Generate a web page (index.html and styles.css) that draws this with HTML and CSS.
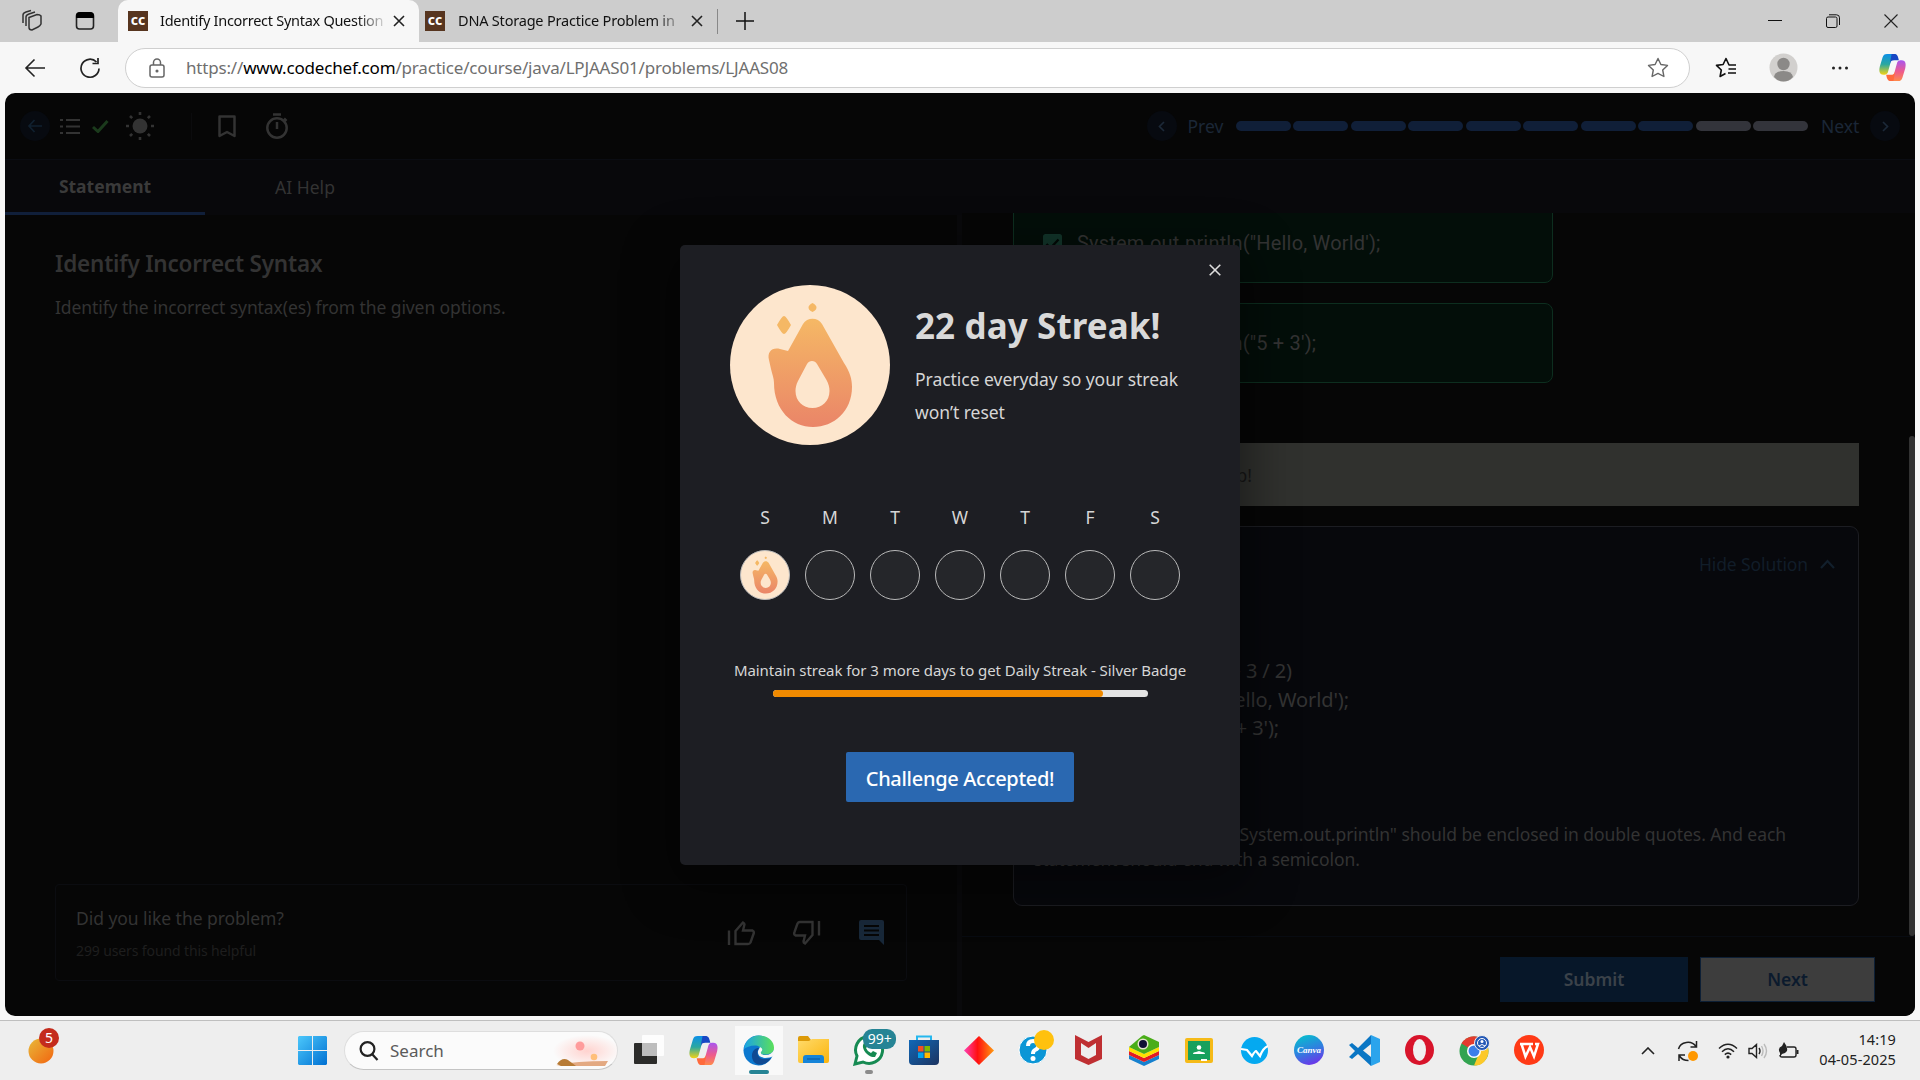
FILE: index.html
```html
<!DOCTYPE html>
<html lang="en">
<head>
<meta charset="utf-8">
<title>Identify Incorrect Syntax</title>
<link rel="stylesheet" href="styles.css">
</head>
<body>
<svg class="defs" width="0" height="0">
  <defs>
    <linearGradient id="fire" x1="0" y1="0" x2="0" y2="1"><stop offset="0" stop-color="#f5b865"/><stop offset="1" stop-color="#ea8568"/></linearGradient>
    <linearGradient id="cpA" x1="0" y1="0" x2="0" y2="1"><stop offset="0" stop-color="#0c8fe8"/><stop offset=".5" stop-color="#2ba8a0"/><stop offset="1" stop-color="#f4d314"/></linearGradient>
    <linearGradient id="cpB" x1="0" y1="0" x2="0" y2="1"><stop offset="0" stop-color="#a855f0"/><stop offset=".55" stop-color="#ee5b8c"/><stop offset="1" stop-color="#ff8a4a"/></linearGradient>
    <linearGradient id="win" x1="0" y1="0" x2="1" y2="1"><stop offset="0" stop-color="#4cc8fb"/><stop offset="1" stop-color="#0070d2"/></linearGradient>
    <linearGradient id="edgeG" x1="0" y1="0" x2="1" y2="0"><stop offset="0" stop-color="#1aa3e6"/><stop offset="1" stop-color="#5be05a"/></linearGradient>
    <linearGradient id="dia" x1="0" y1="0" x2="1" y2="0"><stop offset="0" stop-color="#ff3fb4"/><stop offset=".45" stop-color="#ff1010"/><stop offset="1" stop-color="#ff9a10"/></linearGradient>
    <linearGradient id="store" x1="0" y1="0" x2="1" y2="1"><stop offset="0" stop-color="#1068b8"/><stop offset="1" stop-color="#1c3360"/></linearGradient>
    <linearGradient id="moon" x1="0" y1="0" x2="1" y2="1"><stop offset="0" stop-color="#e8b93a"/><stop offset="1" stop-color="#f2640f"/></linearGradient>
    <linearGradient id="fold" x1="0" y1="0" x2="1" y2="1"><stop offset="0" stop-color="#ffdb6b"/><stop offset="1" stop-color="#fbb40c"/></linearGradient>
    <radialGradient id="sky"><stop offset="0" stop-color="#ffd3cf"/><stop offset="1" stop-color="#ffd3cf" stop-opacity="0"/></radialGradient>
    <symbol id="flame" viewBox="0 0 160 160">
      <path fill="url(#fire)" fill-rule="evenodd" d="M58 66 73 39c4-7 15-7 19 0l22 39c6 9 8 16 8 24 0 24-18 40-39 40S44 125 44 98c0-5-2-9-3-14l-2-9c-2-8 3-13 11-11zM77 79 68 96c-2 4-2.500 7-2.500 10 0 10 7.500 17 17 17s17-7 17-17c0-4-1-7-3-11L87 79c-2-4-8-4-10 0z"/>
      <path fill="#f5b865" d="M54 31q2 0 7 9-5 9-7 9t-7-9q5-9 7-9zM82.500 18q4 2 4 4.500t-4 4.500q-4-2-4-4.500t4-4.500z"/>
    </symbol>
    <symbol id="copilot" viewBox="0 0 30 32">
      <path fill="url(#cpA)" d="M9 1h9c-3 1-4 5-5 9l-3 11c-1 3-3 3-5 3-5 0-5-5-4-9l3-10c1-3 2-4 5-4z"/>
      <path fill="#1747c4" d="M14 1h3c3 0 4 2 5 7h-5c-3 0-4 1-5 4z"/>
      <path fill="url(#cpB)" d="M21 31h-9c3-1 4-5 5-9l3-11c1-3 3-3 5-3 5 0 5 5 4 9l-3 10c-1 3-2 4-5 4z"/>
      <path fill="#ff6a3c" d="M16 31h-3c-3 0-4-2-5-7h5c3 0 4-1 5-4z"/>
    </symbol>
  </defs>
</svg>

<header class="tabstrip">
  <div class="strip-tools">
    <svg width="24" height="24" viewBox="0 0 24 24" fill="none" stroke="#333" stroke-width="1.500"><path d="M9 8.500 17 5.500q3 0 4 1.500v8q-1 2-3 3l-6 3q-3 0-3-2.500zM6 17V8q0-2 3-3l6-2M3 14V6q0-2 3-3l5-1.500"/></svg>
    <svg width="22" height="22" viewBox="0 0 22 22"><rect x="2.500" y="3" width="17" height="16" rx="3" fill="none" stroke="#222" stroke-width="1.600"/><path d="M2 8V6q0-4 4-4h10q4 0 4 4v2z" fill="#000"/></svg>
  </div>
  <div class="tab active"><span class="fav">cc</span><span class="tab-title t1">Identify Incorrect Syntax Question</span><svg class="tx" width="12" height="12" viewBox="0 0 12 12"><path d="m1 1 10 10M11 1 1 11" stroke="#222" stroke-width="1.600"/></svg></div>
  <div class="tab"><span class="fav">cc</span><span class="tab-title t2">DNA Storage Practice Problem in</span><svg class="tx" width="12" height="12" viewBox="0 0 12 12"><path d="m1 1 10 10M11 1 1 11" stroke="#222" stroke-width="1.600"/></svg></div>
  <i class="tab-sep"></i>
  <svg class="plus" width="18" height="18" viewBox="0 0 18 18"><path d="M9 0v18M0 9h18" stroke="#111" stroke-width="1.500"/></svg>
  <div class="win-ctl">
    <svg width="14" height="14" viewBox="0 0 14 14"><path d="M0 6.500h14" stroke="#111"/></svg>
    <svg width="14" height="14" viewBox="0 0 14 14" fill="none" stroke="#111"><rect x=".5" y="3" width="10.500" height="10.500" rx="1.500"/><path d="M3 .8h7.500q3 0 3 3V11"/></svg>
    <svg width="14" height="14" viewBox="0 0 14 14"><path d="m.5.500 13 13M13.500.500l-13 13" stroke="#222" stroke-width="1.100"/></svg>
  </div>
</header>

<div class="toolbar">
  <svg class="nav-back" width="22" height="20" viewBox="0 0 22 20" fill="none" stroke="#222" stroke-width="1.600"><path d="M21 10H2M10.500 1.500 2 10l8.500 8.500"/></svg>
  <svg class="nav-reload" width="22" height="22" viewBox="0 0 22 22" fill="none" stroke="#222" stroke-width="1.700"><path d="M20 11.500A9 9 0 1 1 17.500 5M19 1v5.500h-5.500"/></svg>
  <div class="omnibox">
    <svg width="16" height="20" viewBox="0 0 16 20" fill="none" stroke="#666" stroke-width="1.500"><rect x="1" y="7" width="14" height="12" rx="2"/><path d="M4.500 7V4.500a3.500 3.500 0 0 1 7 0V7"/><circle cx="8" cy="13" r=".8" fill="#666"/></svg>
    <span class="url">https://<b>www.codechef.com</b>/practice/course/java/LPJAAS01/problems/LJAAS08</span>
    <svg class="star" width="22" height="21" viewBox="0 0 22 21" fill="none" stroke="#666" stroke-width="1.400"><path stroke-linejoin="round" d="m11 1.500 2.900 6 6.600.9-4.800 4.600 1.200 6.500L11 16.400l-5.900 3.100L6.300 13 1.500 8.400l6.600-.9z"/></svg>
  </div>
  <div class="tool-right">
    <svg width="22" height="21" viewBox="0 0 22 21" fill="none" stroke="#111" stroke-width="1.600"><path stroke-linejoin="round" d="M20 8h-6L11 1.500l-2.900 6-6.600.9L6.300 13l-1.200 6.500L10.500 16.500M13.500 12H21M13 16h8M15 8h6"/></svg>
    <svg width="29" height="29" viewBox="0 0 29 29"><circle cx="14.500" cy="14.500" r="14" fill="#d2d0ce"/><circle cx="14.500" cy="11" r="6.200" fill="#8b8987"/><path d="M5 24q1-6 9.500-6T24 24q-4 4.500-9.500 4.500T5 24z" fill="#8b8987"/></svg>
    <svg width="18" height="6" viewBox="0 0 18 6" fill="#222"><circle cx="2.500" cy="3" r="1.500"/><circle cx="9" cy="3" r="1.500"/><circle cx="15.500" cy="3" r="1.500"/></svg>
    <svg width="29" height="29"><use href="#copilot"/></svg>
  </div>
</div>

<main class="app">
  <div class="appbar">
    <span class="round"><svg width="16" height="14" viewBox="0 0 16 14" fill="none" stroke="#10202f" stroke-width="1.700"><path d="M15 7H2M7.500 1 2 7l5.500 6"/></svg></span>
    <svg class="i-list" width="20" height="17" viewBox="0 0 20 17" fill="none" stroke="#333" stroke-width="2"><path d="M0 2h3M6 2h14M0 8.500h3M6 8.500h14M0 15h3M6 15h14"/></svg>
    <svg class="i-check" width="17" height="13" viewBox="0 0 17 13"><path d="m1 7 5 4.500L15.500 1" fill="none" stroke="#1b3a1c" stroke-width="3"/></svg>
    <svg class="i-sun" width="28" height="28" viewBox="0 0 28 28"><circle cx="14" cy="14" r="7.500" fill="#333"/><g stroke="#333" stroke-width="2.600"><path d="M14 0v3M14 25v3M0 14h3M25 14h3M4 4l2.200 2.200M21.800 21.800 24 24M24 4l-2.200 2.200M6.200 21.800 4 24"/></g></svg>
    <i class="bar-sep"></i>
    <svg class="i-mark" width="18" height="23" viewBox="0 0 18 23"><path d="M1.500 1.500h15v19.500L9 17l-7.500 4z" fill="none" stroke="#333" stroke-width="2.500" stroke-linejoin="round"/></svg>
    <svg class="i-timer" width="24" height="26" viewBox="0 0 24 26" fill="none" stroke="#333" stroke-width="2.500"><circle cx="12" cy="15" r="9.700"/><path d="M8 1.500h8M12 9v7M19 5.500l2.500 2.500"/></svg>
    <div class="progress-nav">
      <span class="round r2"><svg width="7" height="11" viewBox="0 0 7 11" fill="none" stroke="#1c2938" stroke-width="1.700"><path d="M6 1 1.500 5.500 6 10"/></svg></span>
      <span class="pn prev">Prev</span>
      <div class="segs"><i></i><i></i><i></i><i></i><i></i><i></i><i></i><i></i><i class="g"></i><i class="g"></i></div>
      <span class="pn next">Next</span>
      <span class="round r2"><svg width="7" height="11" viewBox="0 0 7 11" fill="none" stroke="#1c2938" stroke-width="1.700"><path d="M1 1 5.500 5.500 1 10"/></svg></span>
    </div>
  </div>
  <div class="subtabs"><span class="st on">Statement</span><span class="st">AI Help</span></div>
  <div class="panes">
    <section class="left">
      <h1>Identify Incorrect Syntax</h1>
      <p class="desc">Identify the incorrect syntax(es) from the given options.</p>
      <div class="feedback">
        <div class="fb-text"><span class="q">Did you like the problem?</span><span class="cnt">299 users found this helpful</span></div>
        <div class="fb-icons">
          <svg width="28" height="26" viewBox="0 0 28 26" fill="none" stroke="#333" stroke-width="2.400"><path d="M2 10.500V25M8.500 11 16 2.500q2 1 1.200 3L16 10.500h9.500q2 1 1 3.500l-3 8.500q-.8 1.500-2.500 1.500H8.500z"/></svg>
          <svg width="28" height="26" viewBox="0 0 28 26" fill="none" stroke="#333" stroke-width="2.400"><path d="M26 15.500V1M19.500 15 12 23.500q-2-1-1.200-3l1.200-5H2.500q-2-1-1-3.500l3-8.500Q5.300 2 7 2h12.500z"/></svg>
          <svg width="25" height="25" viewBox="0 0 25 25"><path fill="#182839" fill-rule="evenodd" d="M2 0h21q2 0 2 2v23l-5-5H2q-2 0-2-2V2q0-2 2-2zm3 5v2h15V5zm0 4.500v2h15v-2zM5 14v2h15v-2z"/></svg>
        </div>
      </div>
    </section>
    <section class="right">
      <div class="scroll">
        <div class="opt o1"><svg width="19" height="19" viewBox="0 0 19 19"><rect width="19" height="19" rx="2.500" fill="#12352a"/><path d="m3.500 10 4 4 8-8.500" fill="none" stroke="#030a07" stroke-width="2.300"/></svg><span>System.out.println("Hello, World');</span></div>
        <div class="opt o2"><svg width="19" height="19" viewBox="0 0 19 19"><rect width="19" height="19" rx="2.500" fill="#12352a"/><path d="m3.500 10 4 4 8-8.500" fill="none" stroke="#030a07" stroke-width="2.300"/></svg><span>System.out.println("5 + 3');</span></div>
        <div class="notice"><span>Great job!</span></div>
        <div class="solution">
          <div class="hide"><span>Hide Solution</span><svg width="15" height="10" viewBox="0 0 15 10"><path d="m1 9 6.500-7L14 9" fill="none" stroke="#121f2c" stroke-width="2.200"/></svg></div>
          <ol class="code"><li class="c1">System.out.println(5 + 3 / 2)</li><li class="c2">System.out.println("Hello, World');</li><li class="c3">System.out.println("5 + 3');</li></ol>
          <p class="expl"><span class="e1">"System.out.println" should be enclosed in double quotes. And each</span><span class="e2">statement should end with a semicolon.</span></p>
        </div>
      </div>
      <div class="actions"><span class="btn submit">Submit</span><span class="btn nxt">Next</span></div>
      <i class="thumb"></i>
    </section>
  </div>

  <div class="modal">
    <svg class="close" width="12" height="12" viewBox="0 0 12 12"><path d="m.7.700 10.600 10.600M11.300.700.7 11.300" stroke="#ddd" stroke-width="1.600"/></svg>
    <div class="hero">
      <span class="flame-lg"><svg width="160" height="160"><use href="#flame"/></svg></span>
      <div class="hero-text"><h2>22 day Streak!</h2><p>Practice everyday so your streak<br>won’t reset</p></div>
    </div>
    <div class="week">
      <div class="day"><span>S</span><i class="done"><svg width="48" height="48"><use href="#flame"/></svg></i></div>
      <div class="day"><span>M</span><i></i></div>
      <div class="day"><span>T</span><i></i></div>
      <div class="day"><span>W</span><i></i></div>
      <div class="day"><span>T</span><i></i></div>
      <div class="day"><span>F</span><i></i></div>
      <div class="day"><span>S</span><i></i></div>
    </div>
    <p class="goal">Maintain streak for 3 more days to get Daily Streak - Silver Badge</p>
    <div class="meter"><i style="width:88%"></i></div>
    <button class="accept">Challenge Accepted!</button>
  </div>
</main>

<footer class="taskbar">
  <div class="widget"><svg width="26" height="26" viewBox="0 0 26 26"><circle cx="13" cy="13" r="12.500" fill="url(#moon)"/></svg><span class="badge red">5</span></div>
  <svg class="start" width="29" height="29" viewBox="0 0 29 29" fill="url(#win)"><path d="M1 0h13v14H0V1zM15 0h13l1 1v13H15zM0 15h14v14H1l-1-1zM15 15h14v13l-1 1H15z"/></svg>
  <div class="search">
    <svg width="20" height="20" viewBox="0 0 20 20" fill="none" stroke="#222" stroke-width="2.200"><circle cx="8.500" cy="8" r="6.900"/><path d="m13 13 5.500 6"/></svg>
    <span>Search</span>
    <svg class="scene" width="64" height="34" viewBox="0 0 64 34"><ellipse cx="34" cy="17" rx="34" ry="16" fill="url(#sky)"/><circle cx="27" cy="12" r="4.500" fill="#ff9c9c"/><circle cx="41" cy="23" r="3.300" fill="#ffbf7a"/><path d="M3 31q20-4 52-4l-3 5H10z" fill="#e3a982"/><path d="M4 30q5-7 11-4l8 6H8z" fill="#b77b35"/></svg>
  </div>
  <div class="pins">
    <span class="pin"><svg width="30" height="30" viewBox="0 0 30 30"><rect x="0" y="8" width="23" height="21" rx="1" fill="#2c2c2a"/><rect x="8" y="0" width="22" height="21" rx="1" fill="#fff" fill-opacity=".85"/><path d="M8 8h15v13H8z" fill="#bdbdbd"/></svg></span>
    <span class="pin"><svg width="31" height="31"><use href="#copilot"/></svg></span>
    <span class="pin cur"><svg width="31" height="31" viewBox="0 0 31 31"><circle cx="15.500" cy="15.500" r="15" fill="#0c78cf"/><path d="M1 14C2 6 8 .5 16 .5c9 0 15 6 15 12 0 5-4 7-9 7-4 0-5-1-4-3 1-4-2-6-6-6-5 0-9 2-11 3.500z" fill="url(#edgeG)"/><path d="M28 23c-5 9-18 9-19-1-.5-6 3-9 7-9-4 6 0 14 12 10z" fill="#104a93"/><path d="M17 12q4 2 1 5-1 3 5 3 5 0 8-5v6q-4 2-9 2-8-1-7-7z" fill="#f7f7f7"/></svg></span>
    <span class="pin"><svg width="31" height="28" viewBox="0 0 31 28"><path d="M0 2q0-2 2-2h8l3 4v5H0z" fill="#dc9a08"/><path d="M0 5h11l3-2h17v22q0 2-2 2H2q-2 0-2-2z" fill="url(#fold)"/><path d="M5 27v-5q0-3 3-3h15q3 0 3 3v5z" fill="#1684d8"/><path d="M9 23h13" stroke="#08549c"/></svg></span>
    <span class="pin wa"><svg width="32" height="32" viewBox="0 0 32 32"><path d="M2 30l2-8A13.500 13.500 0 1 1 10 28z" fill="#fff" stroke="#168a52" stroke-width="3"/><path d="M11 9c-4 5 4 15 11 14l2-4-4-2-2 2q-4-2-5-5l2-2-2-4z" fill="#168a52"/></svg><b class="badge teal">99+</b></span>
    <span class="pin"><svg width="30" height="30" viewBox="0 0 30 30"><path d="M8 6V1.500h14V6" fill="none" stroke="#25b7ee" stroke-width="2"/><path d="M0 5h30v21q0 4-4 4H4q-4 0-4-4z" fill="url(#store)"/><path fill="#f25022" d="M9 11h5.500v5.500H9z"/><path fill="#7fba00" d="M15.500 11H21v5.500h-5.500z"/><path fill="#00a4ef" d="M9 17.500h5.500V23H9z"/><path fill="#ffb900" d="M15.500 17.500H21V23h-5.500z"/></svg></span>
    <span class="pin"><svg width="30" height="29" viewBox="0 0 30 29"><path d="m15 0 15 14.500L15 29 0 14.500z" fill="url(#dia)"/></svg></span>
    <span class="pin help"><svg width="38" height="36" viewBox="0 0 38 36"><circle cx="16" cy="20" r="14" fill="#0b96d6" stroke="#fff"/><path d="M11 16q0-5 5-5t5.500 4.500q0 3-3.500 4.500-2 1-2 4" fill="none" stroke="#fff" stroke-width="4"/><circle cx="16" cy="28.500" r="2.500" fill="#fff"/><circle cx="27" cy="10" r="10" fill="#ffc10e"/></svg></span>
    <span class="pin"><svg width="27" height="30" viewBox="0 0 27 30"><path d="M0 0 13.500 7 27 0v24l-13.500 6L0 24zM6 8v12l7.500 4 7.500-4V8l-7.500 5z" fill="#bf2f32" fill-rule="evenodd"/></svg></span>
    <span class="pin"><svg width="30" height="31" viewBox="0 0 30 31"><path d="m0 20 15 7 15-7v4l-15 7-15-7z" fill="#1681cf"/><path d="m0 16 15 7 15-7v4l-15 7-15-7z" fill="#e31b22"/><path d="m0 12 15 7 15-7v4l-15 7-15-7z" fill="#ffe000"/><path d="M15 0 30 7v5l-15 7-15-7L13 1z" fill="#49ad18"/><circle cx="14" cy="9" r="5.500" fill="#e5e3ce"/><circle cx="14" cy="9" r="4" fill="#111035"/></svg></span>
    <span class="pin"><svg width="28" height="25" viewBox="0 0 28 25"><rect width="28" height="25" rx="2" fill="#f5ba18"/><path d="M3 3h22v19H3z" fill="#17a05d"/><circle cx="14" cy="9.500" r="2.300" fill="#fff"/><path d="M8 16q0-2 3-2l3-1 3 1q3 0 3 2z" fill="#fff"/><path d="M16 21h6v2h-6z" fill="#fff"/></svg></span>
    <span class="pin"><svg width="27" height="27" viewBox="0 0 27 27"><circle cx="13.500" cy="13.500" r="13.500" fill="#05a9f0"/><path d="m0 12 6 1 5 6q3-5 4-5l4 5q3-8 8-10" fill="none" stroke="#fff" stroke-width="2.200"/></svg></span>
    <span class="pin"><span class="canva">Canva</span></span>
    <span class="pin"><svg width="31" height="31" viewBox="0 0 31 31"><path d="M22 0 9 13l-6-5-3 2 6 6-6 6 3 2 6-5 13 12zM22 9v13l-8-6.500z" fill="#0a76c4" fill-rule="evenodd"/><path d="m22 0 9 4v23l-9 4z" fill="#2ba4ec"/></svg></span>
    <span class="pin"><svg width="29" height="30" viewBox="0 0 29 30"><ellipse cx="14.500" cy="15" rx="14.500" ry="15" fill="#d8142b"/><ellipse cx="14.500" cy="15" rx="6.500" ry="11" fill="#f0f0f0"/></svg></span>
    <span class="pin"><svg width="31" height="31" viewBox="0 0 31 31"><circle cx="15" cy="16" r="14.500" fill="#32a350"/><path d="M2.500 8.500A14.500 14.500 0 0 1 27.500 8.500L15 16z" fill="#e33b2e"/><path d="M27.500 8.500q5 10-2.500 18.500-4 4-10 3.500L21 16l-2-7z" fill="#fcc929"/><circle cx="15" cy="16" r="7" fill="#fff"/><circle cx="15" cy="16" r="5.500" fill="#3b7de9"/><circle cx="23" cy="8" r="7.500" fill="#2459b5" stroke="#eee"/><circle cx="23" cy="8" r="4.500" fill="none" stroke="#fff"/><circle cx="23" cy="6.500" r="1.500" fill="#fff"/><path d="M20 11q3-3 6 0" stroke="#fff" fill="none"/></svg></span>
    <span class="pin"><svg width="30" height="30" viewBox="0 0 30 30"><circle cx="15" cy="15" r="15" fill="#ff3a16"/><path d="M6 9h13M7.500 9l4 12.500L16 12l4 9.500L24 9h-3" fill="none" stroke="#fff" stroke-width="2.500"/></svg></span>
  </div>
  <div class="tray">
    <svg class="chev" width="14" height="8" viewBox="0 0 14 8"><path d="m1 7 6-6 6 6" fill="none" stroke="#222" stroke-width="1.600"/></svg>
    <svg class="sync" width="22" height="22" viewBox="0 0 22 22" fill="none" stroke="#222" stroke-width="1.500"><path d="M1.500 9A9.500 8.500 0 0 1 19 6.500M19.500 1v6h-6M2 21v-6h6M2.500 16q3 4.500 9 4.500"/><circle cx="16" cy="16" r="5" fill="#ff9800" stroke="none"/></svg>
    <svg class="wifi" width="20" height="16" viewBox="0 0 20 16" fill="none" stroke="#222" stroke-width="1.500"><path d="M1 5.500q9-8.500 18 0M4 8.800q6-6 12 0M6.800 11.600q3.200-3 6.400 0"/><circle cx="10" cy="14" r="1.600" fill="#222" stroke="none"/></svg>
    <svg class="spk" width="20" height="16" viewBox="0 0 20 16" fill="none" stroke="#222" stroke-width="1.400"><path d="M1 5.500h3L8.500 1.500v13L4 10.500H1zM11 5q2 3 0 6"/><path d="M13.500 3q3 5 0 10M16 1q5 7 0 14" stroke="#bbb"/></svg>
    <svg class="bat" width="21" height="17" viewBox="0 0 21 17"><path d="M9 5h7q2 0 2 2v6q0 2-2 2H4q-2 0-2-2" fill="none" stroke="#222" stroke-width="1.400"/><path d="M18.500 8h2v4h-2zM6 0q4 5 3 9-2 3-5 3l-2 3v-4Q-1 6 4 4z" fill="#222"/></svg>
    <div class="clock"><span>14:19</span><span>04-05-2025</span></div>
  </div>
</footer>
</body>
</html>
```
FILE: styles.css
```css
* { box-sizing: border-box; }
body { margin: 0; width: 1920px; height: 1080px; overflow: hidden; background: #f7f7f7; font-family: "Noto Sans", "Open Sans", sans-serif; display: flex; flex-direction: column; }
svg { flex: none; display: block; }
h1, h2, p, ol { margin: 0; padding: 0; font-weight: 400; }
.defs { position: absolute; }
span { white-space: nowrap; }

/* Browser window */
.tabstrip { height: 42px; flex: none; background: #cdcdcd; display: flex; align-items: center; }
.strip-tools { width: 118px; height: 42px; padding-left: 20px; display: flex; align-items: center; gap: 30px; }
.tab { height: 42px; width: 298px; padding: 0 0 0 6px; display: flex; align-items: center; }
.tab.active { width: 301px; padding-left: 10px; background: #f7f7f7; border-radius: 10px 10px 0 0; }
.fav { width: 20px; height: 20px; background: #57351f; color: #fff; font: 700 14px/17px "Noto Sans", sans-serif; text-align: center; flex: none; }
.tab-title { margin-left: 12px; font-size: 14.5px; line-height: 20px; margin-top: -2px; color: #111; overflow: hidden; width: 224px; letter-spacing: -.28px; }
.t2 { margin-left: 13px; letter-spacing: -.2px; }
.t1, .t2 { -webkit-mask: linear-gradient(90deg, #000 88%, transparent 102%); mask: linear-gradient(90deg, #000 88%, transparent 102%); }
.tx { margin-left: 9px; }
.tab-sep { width: 1px; height: 25px; background: #888; }
.plus { margin-left: 18px; }
.win-ctl { margin-left: auto; margin-right: 22px; display: flex; gap: 44px; }
.toolbar { height: 51px; flex: none; display: flex; align-items: center; padding: 0 13px 0 24px; }
.nav-reload { margin-left: 33px; }
.omnibox { margin-left: 24px; width: 1565px; height: 40px; border: 1px solid #cfcfcf; border-radius: 20px; background: #fff; display: flex; align-items: center; padding: 0 20px 0 23px; }
.url { margin-left: 21px; font-size: 17px; color: #6f6f6f; letter-spacing: -.18px; }
.url b { color: #000; font-weight: 400; }
.star { margin-left: auto; }
.tool-right { margin-left: auto; display: flex; align-items: center; }
.tool-right svg:nth-child(2) { margin-left: 32px; }
.tool-right svg:nth-child(3) { margin-left: 33px; }
.tool-right svg:nth-child(4) { margin-left: 29px; }

/* Practice page, dimmed behind the dialog */
.app { position: relative; margin: 0 5px; width: 1910px; height: 923px; flex: none; background: #060606; border-radius: 10px; overflow: hidden; color: #333; display: flex; flex-direction: column; }
.appbar { height: 67px; flex: none; display: flex; align-items: center; padding-left: 15px; border-bottom: 1px solid #0a0c12; }
.round { width: 30px; height: 30px; border-radius: 50%; background: #070a10; display: flex; align-items: center; justify-content: center; flex: none; }
.i-list { margin-left: 10px; }
.i-check { margin-left: 12px; }
.i-sun { margin-left: 17px; }
.bar-sep { width: 1px; height: 27px; background: #0b0b0d; margin-left: 37px; }
.i-mark { margin-left: 26px; }
.i-timer { margin-left: 29px; }
.progress-nav { margin-left: auto; margin-right: 15px; display: flex; align-items: center; font-size: 17.500px; color: #1b2737; }
.pn { width: 36px; margin-left: 11px; }
.pn.next { width: 39px; margin-right: 10px; margin-left: 13px; }
.segs { display: flex; gap: 2.500px; margin-left: 12px; }
.segs i { width: 55px; height: 10px; border-radius: 5px; background: #101f38; }
.segs .g { background: #33343b; }
.subtabs { height: 55px; flex: none; background: #08080b; display: flex; font-size: 17.500px; }
.st { width: 200px; text-align: center; line-height: 54px; }
.st.on { font-weight: 700; border-bottom: 3px solid #101f3a; color: #3a3a3a; line-height: 52px; }
.panes { flex: 1; display: flex; min-height: 0; }
.left { width: 957px; border-right: 5px solid #09090b; padding: 30px 50px 35px 50px; display: flex; flex-direction: column; }
h1 { font-size: 22.500px; font-weight: 600; line-height: 38px; white-space: nowrap; letter-spacing: -.2px; }
.desc { font-size: 17.500px; margin-top: 12px; line-height: 24px; letter-spacing: -.09px; }
.feedback { margin-top: auto; height: 97px; border: 1px solid #0b0c10; border-radius: 4px; display: flex; padding: 0 22px 0 20px; }
.fb-text { display: flex; flex-direction: column; padding-top: 21px; }
.q { font-size: 17.500px; line-height: 24px; letter-spacing: -.05px; }
.cnt { font-size: 14px; line-height: 20px; margin-top: 11px; color: #1e1e1e; letter-spacing: -.12px; }
.fb-icons { margin-left: auto; display: flex; gap: 38px; align-items: center; }
.right { position: relative; flex: 1; display: flex; flex-direction: column; margin-top: -2px; background: #060606; }
.scroll { height: 723px; overflow: hidden; padding-left: 51px; }
.opt { width: 540px; height: 80px; border: 1px solid #0d2e1f; border-radius: 8px; background: #030e09; display: flex; align-items: center; padding-left: 29px; font-family: Roboto, sans-serif; font-size: 20px; letter-spacing: .19px; }
.opt span { margin-left: 15px; }
.o1 { margin-top: -10px; }
.o2 { margin-top: 20px; }
.notice { margin-top: 60px; width: 846px; height: 63px; background: #30312e; color: #171717; display: flex; align-items: center; padding-left: 139px; font-size: 17.5px; }
.notice span { width: 100px; text-align: right; }
.solution { margin-top: 20px; width: 846px; height: 380px; border: 1px solid #1c1d22; border-radius: 9px; background: #07080c; padding: 25px 23px 0 20px; display: flex; flex-direction: column; }
.hide { display: flex; justify-content: flex-end; align-items: center; gap: 12px; color: #111d29; font-size: 17.500px; line-height: 24px; letter-spacing: -.1px; }
.code { list-style: none; margin-top: 81px; width: 330px; font-size: 20px; line-height: 28.600px; white-space: nowrap; display: flex; flex-direction: column; letter-spacing: -.1px; }
.code li { text-align: right; }
.c1 { width: 258px; }
.c2 { width: 315px; }
.c3 { width: 245px; }
.expl { margin-top: 79px; font-size: 17.500px; line-height: 25px; display: flex; flex-direction: column; letter-spacing: -.06px; }
.e1 { width: 752px; text-align: right; }
.actions { flex: 1; border-top: 1px solid #080b11; display: flex; justify-content: flex-end; gap: 12px; padding: 20px 40px 0 0; }
.btn { width: 188px; height: 45px; line-height: 45px; text-align: center; font-size: 17.500px; font-weight: 600; background: #071729; color: #3b4249; }
.nxt { width: 175px; background: #3d3d3d; border: 1px solid #0d1f35; color: #0b1a2d; line-height: 43px; }
.thumb { position: absolute; right: 0; top: 223px; width: 6px; height: 500px; border-radius: 3px; background: #323232; }

/* Streak dialog */
.modal { position: absolute; left: 675px; top: 152px; width: 560px; height: 620px; background: #1d1e23; border-radius: 5px; box-shadow: 0 14px 48px 10px rgba(0,0,0,.4); padding: 40px 50px; color: #d6d6d6; display: flex; flex-direction: column; align-items: center; }
.close { position: absolute; right: 19px; top: 19px; }
.hero { width: 460px; height: 160px; display: flex; gap: 25px; }
.flame-lg { width: 160px; height: 160px; border-radius: 50%; background: #fde6cd; flex: none; }
.hero-text { padding-top: 17px; }
h2 { font-size: 35px; font-weight: 700; line-height: 48px; white-space: nowrap; color: #d9d9d9; letter-spacing: .1px; }
.hero-text p { font-size: 17.500px; line-height: 33px; margin-top: 13px; white-space: nowrap; letter-spacing: -.03px; }
.week { display: flex; gap: 15px; margin-top: 60px; }
.day { width: 50px; display: flex; flex-direction: column; align-items: center; gap: 21px; font-size: 17.500px; line-height: 24px; }
.day i { width: 50px; height: 50px; border-radius: 50%; border: 1px solid #b9b9b9; background: #25262a; }
.day .done { background: #fde6cd; }
.goal { margin-top: 60px; font-size: 15px; line-height: 21px; white-space: nowrap; letter-spacing: -.06px; }
.meter { width: 375px; height: 7px; border-radius: 4px; background: #e4e4e4; margin-top: 9px; }
.meter i { display: block; height: 7px; border-radius: 4px; background: #f08a00; }
.accept { margin-top: 55px; width: 228px; height: 50px; flex: none; border: 0; border-radius: 2px; background: #2a68b1; color: #fff; font: 500 20px/50px "Noto Sans", sans-serif; letter-spacing: -.3px; padding: 2px 0 0; white-space: nowrap; }

/* Taskbar */
.taskbar { margin-top: 4px; height: 60px; flex: none; background: #eee; border-top: 1px solid #bfbfbf; display: flex; align-items: center; }
.widget { position: relative; width: 298px; padding-left: 28px; }
.badge { position: absolute; color: #fff; font-weight: 400; text-align: center; }
.red { left: 39px; top: -10px; width: 20px; height: 20px; border-radius: 50%; background: #c42b1c; font-size: 14px; line-height: 20px; }
.search { margin-left: 17px; width: 274px; height: 39px; border-radius: 20px; border: 1px solid #dedede; border-bottom-color: #c4c4c4; background: #fbfbfb; display: flex; align-items: center; padding-left: 14px; color: #5a5a5a; font-size: 17px; }
.search span { margin-left: 11px; }
.scene { margin-left: auto; }
.pins { display: flex; margin-left: 3px; height: 59px; }
.pin { position: relative; width: 55.060px; height: 58px; display: flex; align-items: center; justify-content: center; }
.help { padding: 0 0 5px 5px; }
.cur { background: linear-gradient(#f9f9f9, #f9f9f9) center/48px 49px no-repeat; }
.cur::after, .wa::after { content: ""; position: absolute; bottom: 5px; width: 20px; height: 4px; border-radius: 2px; background: #268495; }
.wa::after { width: 8px; background: #8b8b8b; }
.teal { left: 22px; top: 8px; width: 33px; height: 20px; border-radius: 9px; background: #268495; font-size: 14px; line-height: 20px; }
.canva { width: 30px; height: 30px; border-radius: 50%; background: linear-gradient(160deg, #00c8cb, #2f80df 50%, #7d20ec); color: #fff; font: italic 700 9px/30px "Liberation Serif", serif; text-align: center; }
.tray { margin-left: auto; margin-right: 24px; display: flex; align-items: center; }
.sync { margin-left: 22px; }
.wifi { margin-left: 19px; }
.spk { margin-left: 10px; }
.bat { margin-left: 10px; }
.clock { width: 97px; display: flex; flex-direction: column; align-items: flex-end; font-size: 14.500px; line-height: 20px; padding-bottom: 4px; color: #222; letter-spacing: .1px; }
```
